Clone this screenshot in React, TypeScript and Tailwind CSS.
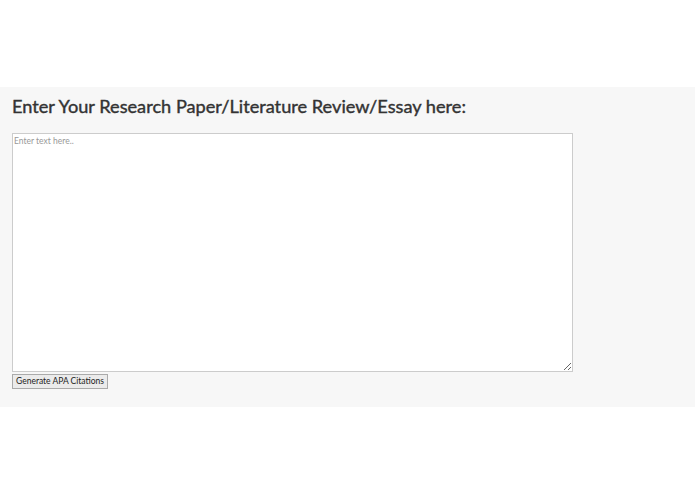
export default function App() {
  return (
    <div className="h-[494px] w-full bg-white font-['Lato',sans-serif]">
      <div className="h-[87px]" />
      <section className="flex flex-col items-start bg-[#f7f7f7] px-3 pt-[7px] pb-[18px]">
        <h2 className="text-[18.2px] font-normal leading-[24px] text-[#333] [-webkit-text-stroke:0.4px_#333]">
          Enter Your Research Paper/Literature Review/Essay here:
        </h2>
        <textarea
          placeholder="Enter text here.."
          className="mt-[15px] h-[239px] w-[561px] border border-[#ccc] bg-white px-[1px] py-[1px] text-[8.5px] text-[#333] placeholder:text-[#999] outline-none"
        />
        <button className="mt-[2px] h-[15px] w-[96px] border border-[#aaa] bg-[#ebebeb] p-0 text-center text-[8.5px] leading-[13px] text-[#222]">
          Generate APA Citations
        </button>
      </section>
    </div>
  );
}
